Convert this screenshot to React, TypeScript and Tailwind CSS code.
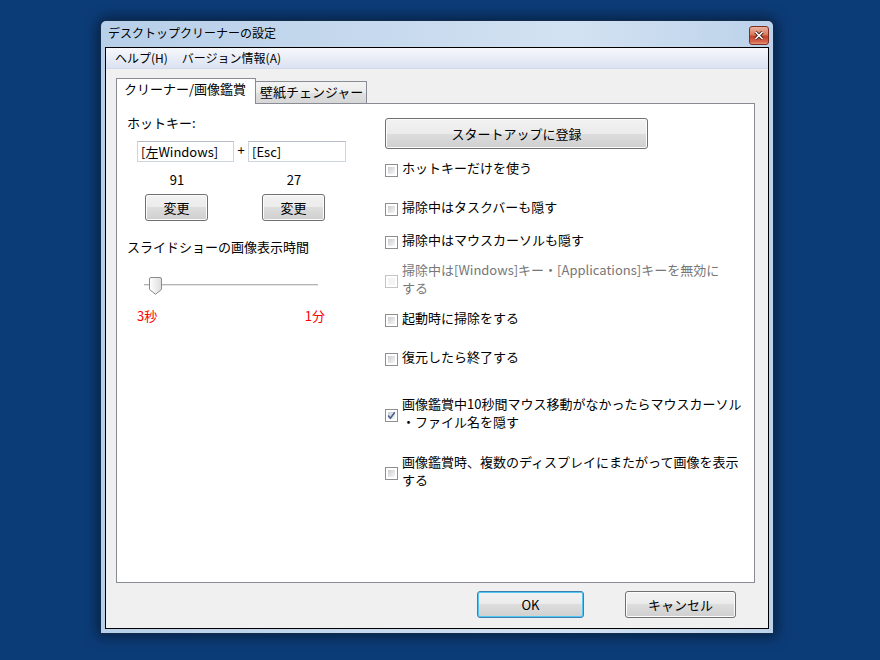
import React from "react";

const btnBg =
  "bg-[linear-gradient(to_bottom,#f2f2f2_0%,#ebebeb_50%,#dddddd_50%,#cfcfcf_100%)]";

function Btn({ w, h, children, def }: { w: string; h: string; children: React.ReactNode; def?: boolean }) {
  return (
    <div
      className={
        "flex items-center justify-center rounded-[3px] border text-[13px] leading-[18px] text-black " +
        btnBg +
        " " +
        w +
        " " +
        h +
        (def
          ? " border-[#3c7fb1] shadow-[inset_0_0_0_1px_#52c6f4]"
          : " border-[#707070] shadow-[inset_0_0_0_1px_#fcfcfc]")
      }
    >
      {children}
    </div>
  );
}

function Check({ checked, disabled }: { checked?: boolean; disabled?: boolean }) {
  return (
    <div
      className={
        "relative w-[13px] h-[13px] shrink-0 border p-[2px] bg-white " +
        (disabled ? "border-[#c4c4c4]" : "border-[#8e8f8f]")
      }
    >
      <div
        className={
          "w-full h-full " +
          (disabled
            ? "bg-[#f4f4f4]"
            : "bg-[linear-gradient(135deg,#c9ccd1_0%,#e3e4e6_55%,#f7f7f7_100%)]")
        }
      />
      {checked && (
        <svg className="absolute left-[1px] top-[1px]" width="9" height="9" viewBox="0 0 9 9">
          <path d="M1.2 4.6 L3.4 7.2 L7.8 1.2" fill="none" stroke="#4a5f97" strokeWidth="1.6" />
        </svg>
      )}
    </div>
  );
}

function Row({
  mt,
  lines,
  checked,
  disabled,
}: {
  mt: string;
  lines: string[];
  checked?: boolean;
  disabled?: boolean;
}) {
  return (
    <div className={"flex items-center " + mt}>
      <div className="mt-[5px] h-[13px]">
        <Check checked={checked} disabled={disabled} />
      </div>
      <div
        className={
          "ml-[4px] text-[13px] leading-[18px] whitespace-nowrap " +
          (disabled ? "text-[#777777]" : "text-black")
        }
      >
        {lines.map((l, i) => (
          <div key={i}>{l}</div>
        ))}
      </div>
    </div>
  );
}

export default function App() {
  return (
    <div className="w-[880px] h-[660px] overflow-hidden bg-[#0c3c78] pt-[21px] pl-[101px] font-['Noto_Sans_CJK_JP','Noto_Sans',sans-serif]">
      <div className="w-[672px] h-[612px] flex flex-col rounded-t-[5px] bg-[linear-gradient(to_right,#b7cfe9_0%,#c8daee_45%,#d3e2f2_70%,#bcd2ea_100%)] shadow-[0_0_0_1px_#142c4c,0_0_14px_4px_rgba(0,0,0,0.45)]">
        {/* Title bar */}
        <div className="h-[26px] flex items-start shrink-0">
          <div className="pl-[7px] pt-[3px] text-[12px] leading-[18px] text-black">
            デスクトップクリーナーの設定
          </div>
          <div className="ml-auto mr-[4px] mt-[5px] w-[20px] h-[19px] rounded-[3px] border border-[#7a3024] bg-[linear-gradient(to_bottom,#eab3a0_0%,#d97a5e_45%,#c4432a_55%,#d4634a_85%,#e89478_100%)] flex items-center justify-center">
            <svg width="10" height="9" viewBox="0 0 10 9">
              <path d="M1.5 1 L8.5 8 M8.5 1 L1.5 8" stroke="#3a1a14" strokeWidth="3.2" />
              <path d="M1.5 1 L8.5 8 M8.5 1 L1.5 8" stroke="#ffffff" strokeWidth="1.6" />
            </svg>
          </div>
        </div>
        {/* Client */}
        <div className="mx-[4px] mb-[4px] flex-1 border border-black bg-[#f0f0f0] flex flex-col">
          {/* Menu */}
          <div className="h-[21px] shrink-0 border-b border-[#d3d9e8] bg-[linear-gradient(to_bottom,#f7f8fc_0%,#e9edf7_50%,#dbe2f2_100%)] flex items-center pl-[9px] text-[12px] leading-[20px] text-black">
            <span>ヘルプ(H)</span>
            <span className="ml-[14px]">バージョン情報(A)</span>
          </div>
          {/* Tabs */}
          <div className="mt-[9px] ml-[10px] h-[26px] flex items-end relative z-10 mb-[-1px]">
            <div className="relative z-10 w-[140px] h-[26px] border border-b-0 border-[#898c95] bg-white px-[7px] pt-[1px] text-[13px] leading-[18px] text-black whitespace-nowrap">
              クリーナー/画像鑑賞
            </div>
            <div className="ml-[-1px] w-[112px] h-[23px] border border-[#898c95] bg-[linear-gradient(to_bottom,#f3f3f3_0%,#ececec_50%,#e0e0e0_50%,#d7d7d7_100%)] pl-[4px] pt-[1px] text-[13px] leading-[18px] text-black whitespace-nowrap">
              壁紙チェンジャー
            </div>
          </div>
          {/* Panel */}
          <div className="ml-[10px] w-[639px] h-[480px] shrink-0 border border-[#898c95] bg-white flex text-black">
            {/* Left column */}
            <div className="w-[268px] pl-[10px] flex flex-col">
              <div className="mt-[10px] text-[13px] leading-[18px]">ホットキー:</div>
              <div className="mt-[9px] ml-[10px] flex items-center">
                <div className="w-[97px] h-[21px] border border-[#cdd4de] border-t-[#b5bcc7] pl-[3px] text-[13px] leading-[19px] whitespace-nowrap">
                  [左Windows]
                </div>
                <div className="w-[14px] text-center text-[13px] leading-[18px] mt-[-4px]">+</div>
                <div className="w-[98px] h-[21px] border border-[#cdd4de] border-t-[#b5bcc7] pl-[3px] text-[13px] leading-[19px] whitespace-nowrap">
                  [Esc]
                </div>
              </div>
              <div className="mt-[9px] ml-[18px] flex text-[13px] leading-[18px]">
                <div className="w-[64px] text-center">91</div>
                <div className="ml-[53px] w-[64px] text-center">27</div>
              </div>
              <div className="mt-[5px] ml-[18px] flex gap-[54px]">
                <Btn w="w-[63px]" h="h-[27px]">変更</Btn>
                <Btn w="w-[63px]" h="h-[27px]">変更</Btn>
              </div>
              <div className="mt-[17px] text-[13px] leading-[18px] whitespace-nowrap">
                スライドショーの画像表示時間
              </div>
              <div className="mt-[21px] ml-[17px] w-[174px] h-[18px] relative">
                <div className="absolute left-0 right-0 top-[7px] h-[1px] bg-[#b4b4b4]" />
                <div className="absolute left-0 right-0 top-[8px] h-[1px] bg-[#e6e6e6]" />
                <svg className="absolute left-[5px] top-0" width="13" height="18" viewBox="0 0 13 18">
                  <defs>
                    <linearGradient id="th" x1="0" y1="0" x2="1" y2="0">
                      <stop offset="0" stopColor="#ffffff" />
                      <stop offset="1" stopColor="#dcdcdc" />
                    </linearGradient>
                  </defs>
                  <path
                    d="M2 0.5 H11 Q12.5 0.5 12.5 2 V12.5 L6.5 17.3 L0.5 12.5 V2 Q0.5 0.5 2 0.5 Z"
                    fill="url(#th)"
                    stroke="#8b8b8b"
                  />
                </svg>
              </div>
              <div className="mt-[12px] ml-[10px] w-[188px] flex justify-between text-[13px] leading-[18px] text-[#ff0000]">
                <span>3秒</span>
                <span>1分</span>
              </div>
            </div>
            {/* Right column */}
            <div className="flex-1 flex flex-col">
              <div className="mt-[14px]">
                <Btn w="w-[263px]" h="h-[31px]">スタートアップに登録</Btn>
              </div>
              <Row mt="mt-[10px]" lines={["ホットキーだけを使う"]} />
              <Row mt="mt-[21px]" lines={["掃除中はタスクバーも隠す"]} />
              <Row mt="mt-[15px]" lines={["掃除中はマウスカーソルも隠す"]} />
              <Row
                mt="mt-[12px]"
                disabled
                lines={["掃除中は[Windows]キー・[Applications]キーを無効に", "する"]}
              />
              <Row mt="mt-[12px]" lines={["起動時に掃除をする"]} />
              <Row mt="mt-[21px]" lines={["復元したら終了する"]} />
              <Row
                mt="mt-[29px]"
                checked
                lines={["画像鑑賞中10秒間マウス移動がなかったらマウスカーソル", "・ファイル名を隠す"]}
              />
              <Row
                mt="mt-[22px]"
                lines={["画像鑑賞時、複数のディスプレイにまたがって画像を表示", "する"]}
              />
            </div>
          </div>
          {/* Bottom buttons */}
          <div className="mt-[8px] flex justify-end pr-[32px] gap-[41px]">
            <Btn w="w-[107px]" h="h-[27px]" def>
              OK
            </Btn>
            <Btn w="w-[111px]" h="h-[27px]">キャンセル</Btn>
          </div>
        </div>
      </div>
    </div>
  );
}
